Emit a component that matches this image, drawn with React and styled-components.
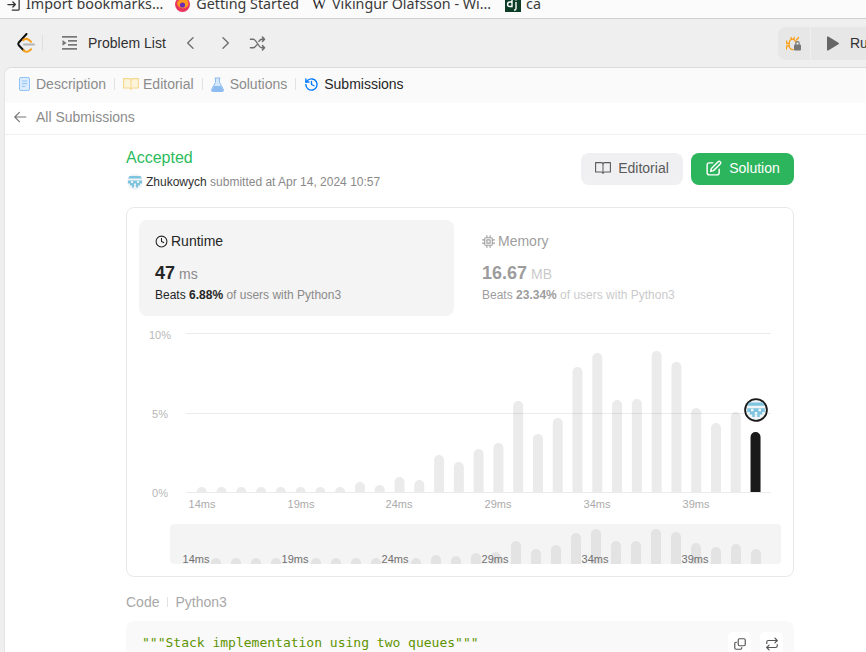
import React from 'react';
import styled, { createGlobalStyle } from 'styled-components';

const Global = createGlobalStyle`
  html, body { margin: 0; padding: 0; height: 652px; overflow: hidden; background: #efefef; }
  #root { height: 652px; overflow: hidden; }
  * { box-sizing: border-box; }
`;
const Page = styled.div`
  width: 866px; height: 652px; overflow: hidden; display: flex; flex-direction: column;
  font-family: "Liberation Sans", Arial, sans-serif; color: #262626; background: #efefef;
`;
const Bookmarks = styled.div`
  height: 19px; flex: none; background: #fbfbfb; border-bottom: 1px solid #cfcfcf; overflow: hidden;
  display: flex; align-items: flex-end; padding: 0 0 6px 6px;
  font-family: "Noto Sans", sans-serif; font-size: 14.3px; line-height: 16px; color: #3a3a3a; white-space: nowrap;
`;
const Mark = styled.span`
  display: inline-flex; align-items: center; gap: ${p => p.$inner || 5}px; margin-right: ${p => p.$gap}px; flex: none; height: 16px;
  svg { flex: none; }
`;
const WikiGlyph = styled.span`
  font-family: "Liberation Serif", serif; font-size: 15px; color: #222; width: 16px; text-align: center; flex: none;
`;
const Nav = styled.div`
  height: 48px; flex: none; display: flex; align-items: center; padding-left: 17px; background: #efefef;
`;
const Divider = styled.span`
  width: 1px; height: 16px; background: #dedede; margin: 0 19px 0 7px; flex: none;
`;
const NavIcon = styled.span`
  display: flex; flex: none; margin-right: ${p => p.$mr || 0}px; color: #6e6e6e;
`;
const NavTitle = styled.span`
  font-size: 14px; margin-right: 17px; color: #303030; white-space: nowrap;
`;
const RunGroup = styled.div`
  margin-left: auto; display: flex; gap: 1px; height: 33px; flex: none; margin-right: -40px;
`;
const BugBtn = styled.div`
  width: 32px; background: #e7e7e7; border-radius: 8px 0 0 8px; display: flex; align-items: center; justify-content: center;
`;
const RunBtn = styled.div`
  width: 95px; background: #e7e7e7; display: flex; align-items: center; padding-left: 15px; gap: 11px;
  font-size: 14px; color: #303030;
`;
const Panel = styled.div`
  flex: 1; min-height: 0; margin-left: 4px; background: #fff; border-radius: 8px 0 0 0;
  border-top: 1px solid #dcdcdc; border-left: 1px solid #e4e4e4; overflow: hidden;
`;
const Tabs = styled.div`
  height: 35px; display: flex; align-items: center; padding: 0 0 3px 14px; background: #fafafa; font-size: 14px;
`;
const Tab = styled.span`
  display: flex; align-items: center; gap: ${p => p.$gap}px; color: ${p => p.$active ? '#262626' : '#8c8c8c'}; white-space: nowrap;
`;
const TabSep = styled.span`
  width: 1px; height: 12px; background: #e2e2e2; flex: none; margin: 0 ${p => p.$r}px 0 ${p => p.$l}px;
`;
const BackRow = styled.div`
  height: 32px; display: flex; align-items: center; padding: 0 0 3px 8px; gap: 9px;
  border-bottom: 1px solid #f0f0f0; font-size: 14px; color: #8c8c8c;
`;
const Content = styled.div`
  width: 668px; margin-left: 121px; padding-top: 8px;
`;
const Head = styled.div`
  display: flex; justify-content: space-between; align-items: flex-start; height: 64px;
`;
const Status = styled.div`
  font-size: 16px; line-height: 20px; color: #2cbb5d; margin-top: 5px;
`;
const Meta = styled.div`
  display: flex; align-items: center; gap: 3px; font-size: 12px; line-height: 16px; color: #8a8a8a; margin-top: 6px; padding-left: 1px;
  b { font-weight: 400; color: #303030; }
`;
const Actions = styled.div`
  display: flex; gap: 8px; margin-top: 10px;
`;
const Button = styled.div`
  height: 32px; width: ${p => p.$w}px; border-radius: 8px; display: flex; align-items: center; justify-content: center; gap: 7px;
  font-size: 14px; padding-bottom: 2px; background: ${p => p.$primary ? '#2cb55d' : '#f0f0f2'}; color: ${p => p.$primary ? '#fff' : '#5a5a5a'};
`;
const Card = styled.div`
  height: 370px; border: 1px solid #e8e8e8; border-radius: 8px; padding: 12px 12px 0;
`;
const Stats = styled.div`
  display: flex; gap: 12px;
`;
const Stat = styled.div`
  width: 315px; height: 96px; border-radius: 8px; padding: 13px 16px 0; background: ${p => p.$on ? '#f4f4f4' : 'transparent'};
  opacity: ${p => p.$on ? 1 : 0.45};
`;
const StatTitle = styled.div`
  display: flex; align-items: center; gap: 3px; font-size: 14px; line-height: 16px; color: #262626;
`;
const StatValue = styled.div`
  margin-top: 13px; line-height: 22px; font-size: 14px; color: #8a8a8a; display: flex; align-items: baseline; gap: 4px;
  b { font-size: 18px; color: #262626; }
`;
const StatBeats = styled.div`
  margin-top: 2px; font-size: 12px; line-height: 16px; color: #8a8a8a;
  b { color: #262626; font-weight: 400; } strong { color: #262626; font-weight: 700; }
`;
const Chart = styled.svg`
  display: block; margin: 5px 0 0 -13px; overflow: visible;
  text { font-family: "Liberation Sans", sans-serif; font-size: 11px; }
`;
const CodeLabel = styled.div`
  margin-top: 16px; height: 18px; display: flex; align-items: center; font-size: 14px; color: #a8a8a8; gap: 7.5px;
  i { width: 1px; height: 10px; background: #e2e2e2; }
`;
const CodeBlock = styled.div`
  margin-top: 10px; height: 80px; background: #f9f9f9; border-radius: 8px; padding: 12px 11px 0 16px; display: flex; justify-content: space-between; align-items: flex-start;
`;
const CodeLine = styled.code`
  font-family: "DejaVu Sans Mono", monospace; font-size: 13px; line-height: 19px; color: #5f9400; white-space: pre;
`;
const CodeTools = styled.div`
  display: flex; gap: 9px; margin-top: -1px;
`;
const CodeTool = styled.div`
  width: 23px; height: 23px; border-radius: 5px; background: #fff; color: #555; display: flex; align-items: center; justify-content: center;
`;

const AvatarArt = () => (
  <>
    <circle cx="8" cy="8" r="8" fill="#eef4f7" />
    <path d="M2.600 2h10.800a8 8 0 0 1 1.500 2.500H1.100A8 8 0 0 1 2.600 2z" fill="#7fc4df" />
    <path d="M1 6.500h14v3h-2v2h-2v2H9v-2H7v2H5v-2H3v-2H1z" fill="#7fc4df" />
    <path d="M4 7h2v2H4zM10 7h2v2h-2zM7 9.500h2v2H7z" fill="#eef4f7" />
  </>
);
const Avatar = () => (
  <svg width="16" height="16" viewBox="0 0 16 16"><AvatarArt /></svg>
);

const Logo = () => (
  <svg width="18" height="21" viewBox="0 0 18 21" fill="none" strokeLinecap="round" strokeLinejoin="round">
    <path d="M9.500 1 L1.800 9.500 Q0.800 10.800 1.800 12.200 L6.500 17.200" stroke="#111" strokeWidth="2" />
    <path d="M6.500 17.200 Q9 19.800 12 18 L14 16.200" stroke="#f89f1b" strokeWidth="2" />
    <path d="M6 7.200 Q8.800 4.800 11.800 6.800 L14 8.800" stroke="#f89f1b" strokeWidth="2" />
    <path d="M7 11.500 H17" stroke="#b3b3b3" strokeWidth="2" />
  </svg>
);
const Stroke = ({ w = 16, h = 16, sw = 1.5, vb = '0 0 24 24', c = 'currentColor', children }) => (
  <svg width={w} height={h} viewBox={vb} fill="none" stroke={c} strokeWidth={sw} strokeLinecap="round" strokeLinejoin="round">{children}</svg>
);
const ListIcon = () => (
  <svg width="15" height="14" viewBox="0 0 15 14" fill="#777">
    <rect width="15" height="1.700" y="0" /><rect x="6" width="9" height="1.700" y="4" /><rect x="6" width="9" height="1.700" y="8" /><rect width="15" height="1.700" y="12" />
    <path d="M0.500 4 L4.500 6.900 L0.500 9.800z" />
  </svg>
);
const BugIcon = () => (
  <svg width="16" height="15" viewBox="0 0 16 15" fill="none" stroke="#f7a11f" strokeWidth="1.300" strokeLinecap="round">
    <path d="M3.200 6.500 a3.400 4.500 0 0 1 6.600 0 M3.200 6.500 V10 a3.300 3.800 0 0 0 4 3.500" />
    <path d="M5 1.500 L5.600 3 M8.400 1.500 L7.600 3 M3 7.500 H0.800 L0.600 5 M3 10 H0.800 L0.400 13 M10.500 4 L12.500 1.500" />
    <rect x="8" y="8.500" width="7" height="6" rx="1" fill="#777" stroke="none" />
    <path d="M9.800 8.500 V7.300 a1.700 1.700 0 0 1 3.400 0 V8.500" stroke="#777" strokeWidth="1.100" />
  </svg>
);
const DocIcon = () => (
  <svg width="11" height="14" viewBox="0 0 11 14">
    <rect x=".5" y=".5" width="10" height="13" rx="1.500" fill="#dcecfd" stroke="#8ec3f7" />
    <path d="M2.800 4h5.400M2.800 6.700h5.400M2.800 9.400h3.400" stroke="#8ec3f7" strokeWidth="1" />
  </svg>
);
const BookIcon = ({ c = '#f6d88b', fill = '#fdf4dc', w = 16, h = 12 }) => (
  <svg width={w} height={h} viewBox="0 0 16 12">
    <path d="M.6.6H6.200Q8 .6 8 2.200 8 .6 9.800.6H15.400V10H9.600Q8 10 8 11.400 8 10 6.400 10H.6Z" fill={fill} stroke={c} strokeWidth="1.100" strokeLinejoin="round" />
    <path d="M8 2.200V11" stroke={c} strokeWidth="1" />
  </svg>
);
const FlaskIcon = () => (
  <svg width="13" height="15" viewBox="0 0 13 15">
    <path d="M4.500 1V5.400L.6 12.400Q0 14.500 2 14.500H11Q13 14.500 12.400 12.400L8.500 5.400V1" fill="#d5e7fb" stroke="#8ebcf0" strokeWidth="1" />
    <path d="M3 9H10L12.200 13.200Q12.400 14.500 11 14.500H2Q.6 14.500.8 13.200Z" fill="#8ebcf0" />
    <path d="M3.600 1H9.400" stroke="#8ebcf0" strokeWidth="1.200" />
  </svg>
);
const HistoryIcon = () => (
  <Stroke w={15} h={15} sw={2.200} c="#007aff">
    <path d="M3 12a9 9 0 1 0 3-6.700L3 8" /><path d="M3 3v5h5" /><path d="M12 7v5l4 2" />
  </Stroke>
);
const ChipIcon = () => (
  <Stroke w={13} h={13} sw={2}>
    <rect x="5" y="5" width="14" height="14" rx="2" /><rect x="9" y="9" width="6" height="6" />
    <path d="M9 1v3M15 1v3M9 20v3M15 20v3M1 9h3M1 15h3M20 9h3M20 15h3" />
  </Stroke>
);

const mainTops = [487,487,487,487,487,487,487,487,482,485,477,480,455,462,449,443,401,434,418,367,353,400,399,351,362,408,423,412,432];
const miniBars = [[216,558],[236,558],[256,558],[276,558],[316,558],[336,558],[356,558],[376,558],[416,558],[436,555],[456,556],[476,553],[496,552],[516,541],[536,549],[556,545],[576,533],[596,529],[616,541],[636,541],[656,529],[676,532],[696,543],[716,547],[736,544],[756,549]];
const xLabels = [[202,'14ms'],[301,'19ms'],[399,'24ms'],[498,'29ms'],[597,'34ms'],[696,'39ms']];
const miniLabels = [[196,'14ms'],[295,'19ms'],[395,'24ms'],[495,'29ms'],[595,'34ms'],[695,'39ms']];

const RunChart = () => (
  <Chart width="668" height="244" viewBox="126 321 668 244">
    {[[335,'10%',160],[414,'5%',160],[493,'0%',160]].map(([y,t,x]) => (
      <text key={t} x={x} y={y + 4} textAnchor="middle" fill="#b8b8b8">{t}</text>
    ))}
    {mainTops.map((t, i) => {
      const x = 201.7 + i * 19.78;
      const last = i === mainTops.length - 1;
      return <path key={i} d={`M${x - 5} 492V${t + 5}a5 5 0 0 1 10 0V492z`} fill={last ? '#1a1a1a' : '#ebebeb'} />;
    })}
    {[333.5, 413.5, 492.5].map(y => <line key={y} x1="186" x2="771" y1={y} y2={y} stroke="#000" strokeOpacity="0.08" />)}
    {xLabels.map(([x,t]) => <text key={t} x={x} y={508} textAnchor="middle" fill="#ababab">{t}</text>)}
    <rect x="170" y="524" width="611" height="40" rx="4" fill="#f4f4f4" />
    {miniBars.map(([x,t]) => <path key={x} d={`M${x - 5} 564V${t + 5}a5 5 0 0 1 10 0V564z`} fill="#e3e3e3" />)}
    {miniLabels.map(([x,t]) => <text key={t} x={x} y={563} textAnchor="middle" fill="#707070">{t}</text>)}
    <circle cx="756" cy="410" r="11.800" fill="#1a1a1a" />
    <svg x="746" y="400" width="20" height="20" viewBox="0 0 16 16"><AvatarArt /></svg>
  </Chart>
);

export default function App() {
  return (
    <Page>
      <Global />
      <Bookmarks>
        <Mark $gap={12}>
          <Stroke w={15} h={15} sw={2} c="#333"><path d="M10 3h9a2 2 0 0 1 2 2v14a2 2 0 0 1-2 2h-9" /><path d="M3 12h12M11 8l4 4-4 4" /></Stroke>
          Import bookmarks…
        </Mark>
        <Mark $gap={12} $inner={6}>
          <svg width="15" height="15" viewBox="0 0 15 15"><circle cx="7.500" cy="7.500" r="7.500" fill="#e8345f" /><path d="M7.500 1a6 6 0 0 1 6 6.500A6 6 0 0 1 2 6Q4 2 7.500 1z" fill="#ff9a1f" /><circle cx="7.500" cy="8" r="2.600" fill="#6b2bb5" /></svg>
          Getting Started
        </Mark>
        <Mark $gap={14}>
          <WikiGlyph>W</WikiGlyph>
          Vikingur Olafsson - Wi…
        </Mark>
        <Mark $gap={0}>
          <svg width="16" height="16" viewBox="0 0 16 16"><rect width="16" height="16" fill="#0c3c26" /><path d="M7 3v7.500H4.800a2 2 0 0 1 0-4.500H7M11 6v6.500q0 1.500-2 1.800M11 3.400v1" fill="none" stroke="#fff" strokeWidth="1.400" /></svg>
          ca
        </Mark>
      </Bookmarks>
      <Nav>
        <NavIcon $mr={0}><Logo /></NavIcon>
        <Divider />
        <NavIcon $mr={11}><ListIcon /></NavIcon>
        <NavTitle>Problem List</NavTitle>
        <NavIcon $mr={18}><Stroke w={16} h={16} sw={2}><path d="M15 4l-8 8 8 8" /></Stroke></NavIcon>
        <NavIcon $mr={16}><Stroke w={16} h={16} sw={2}><path d="M9 4l8 8-8 8" /></Stroke></NavIcon>
        <NavIcon><Stroke w={17} h={17} sw={2}><path d="M2 6h4c5 0 7 12 12 12h4M2 18h4c2 0 3.500-2 5-4M14 9c1-1.500 2.500-3 4-3h4M19 3l3 3-3 3M19 15l3 3-3 3" /></Stroke></NavIcon>
        <RunGroup>
          <BugBtn><BugIcon /></BugBtn>
          <RunBtn>
            <svg width="13" height="15" viewBox="0 0 13 15"><path d="M1 1.200a.8.8 0 0 1 1.200-.7L12.500 6.800a.8.8 0 0 1 0 1.400L2.200 14.500A.8.8 0 0 1 1 13.800Z" fill="#666" /></svg>
            Run
          </RunBtn>
        </RunGroup>
      </Nav>
      <Panel>
        <Tabs>
          <Tab $gap={6}><DocIcon />Description</Tab>
          <TabSep $l={8} $r={8} />
          <Tab $gap={4}><BookIcon />Editorial</Tab>
          <TabSep $l={8} $r={8} />
          <Tab $gap={6}><FlaskIcon />Solutions</Tab>
          <TabSep $l={8} $r={8} />
          <Tab $gap={5} $active><HistoryIcon />Submissions</Tab>
        </Tabs>
        <BackRow>
          <Stroke w={14} h={14} sw={2} c="#777"><path d="M22 12H3M11 4l-8 8 8 8" /></Stroke>
          All Submissions
        </BackRow>
        <Content>
          <Head>
            <div>
              <Status>Accepted</Status>
              <Meta><Avatar /><span><b>Zhukowych</b> submitted at Apr 14, 2024 10:57</span></Meta>
            </div>
            <Actions>
              <Button $w={102}><BookIcon c="#5a5a5a" fill="none" />Editorial</Button>
              <Button $w={103} $primary>
                <Stroke w={17} h={17} sw={2}><path d="M11 4H6a3 3 0 0 0-3 3v11a3 3 0 0 0 3 3h11a3 3 0 0 0 3-3v-5" /><path d="M18.500 2.500a2.100 2.100 0 0 1 3 3L12 15l-4 1 1-4z" /></Stroke>
                Solution
              </Button>
            </Actions>
          </Head>
          <Card>
            <Stats>
              <Stat $on>
                <StatTitle><Stroke w={13} h={13} sw={2}><circle cx="12" cy="12" r="10" /><path d="M12 6v6l4 2" /></Stroke>Runtime</StatTitle>
                <StatValue><b>47</b>ms</StatValue>
                <StatBeats><b>Beats</b> <strong>6.88%</strong> of users with Python3</StatBeats>
              </Stat>
              <Stat>
                <StatTitle><ChipIcon />Memory</StatTitle>
                <StatValue><b>16.67</b>MB</StatValue>
                <StatBeats><b>Beats</b> <strong>23.34%</strong> of users with Python3</StatBeats>
              </Stat>
            </Stats>
            <RunChart />
          </Card>
          <CodeLabel>Code<i />Python3</CodeLabel>
          <CodeBlock>
            <CodeLine>{'"""Stack implementation using two queues"""'}</CodeLine>
            <CodeTools>
              <CodeTool><Stroke w={14} h={14} sw={2}><rect x="9" y="3" width="12" height="12" rx="2" /><path d="M6 9H5a2 2 0 0 0-2 2v8a2 2 0 0 0 2 2h8a2 2 0 0 0 2-2v-1" /></Stroke></CodeTool>
              <CodeTool><Stroke w={14} h={14} sw={2}><path d="M17 2l4 4-4 4" /><path d="M3 11V9a3 3 0 0 1 3-3h15" /><path d="M7 22l-4-4 4-4" /><path d="M21 13v2a3 3 0 0 1-3 3H3" /></Stroke></CodeTool>
            </CodeTools>
          </CodeBlock>
        </Content>
      </Panel>
    </Page>
  );
}
